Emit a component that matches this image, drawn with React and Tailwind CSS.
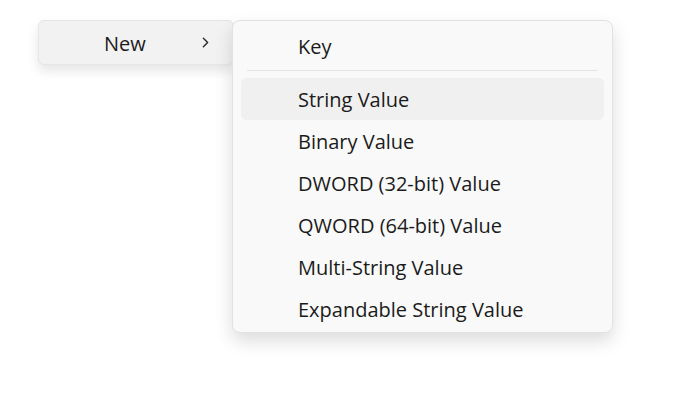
import React from 'react';
import { ChevronRight } from 'lucide-react';

const items = [
  'String Value',
  'Binary Value',
  'DWORD (32-bit) Value',
  'QWORD (64-bit) Value',
  'Multi-String Value',
  'Expandable String Value',
];

const MenuItem = ({ label, active }) => (
  <div
    className={`mx-2 h-[42px] flex items-center pl-[57px] pt-[2px] rounded-[5px] ${active ? 'bg-[#f0f0f0]' : ''}`}
  >
    <span>{label}</span>
  </div>
);

const App = () => {
  return (
    <div
      className="w-[690px] h-[393px] bg-white text-[#1b1b1b] text-[20px] leading-[26px] relative"
      style={{ fontFamily: '"Open Sans", "Noto Sans", sans-serif' }}
    >
      <div className="flex items-start pt-5 pl-[38px]">
        {/* parent item */}
        <div className="w-[196px] h-[45px] rounded-[6px] bg-[#f2f2f2] border border-[#e6e6e6] shadow-[0_6px_12px_rgba(0,0,0,0.10)] flex items-center pt-[3px]">
          <span className="ml-[65px] w-[93px]">New</span>
          <ChevronRight size={17} strokeWidth={2} className="text-[#2b2b2b] -mt-[3px]" />
        </div>

        {/* submenu */}
        <div className="-ml-[2px] w-[381px] rounded-[8px] bg-[#f9f9f9] border border-[#e2e2e2] shadow-[0_8px_18px_rgba(0,0,0,0.14)] pt-1 pb-[2px] relative">
          <MenuItem label="Key" />
          <div className="mx-[14px] h-px bg-[#e3e3e3] mt-[3px] mb-[7px]" />
          {items.map((label, i) => (
            <MenuItem key={label} label={label} active={i === 0} />
          ))}
        </div>
      </div>
    </div>
  );
};

export default App;
